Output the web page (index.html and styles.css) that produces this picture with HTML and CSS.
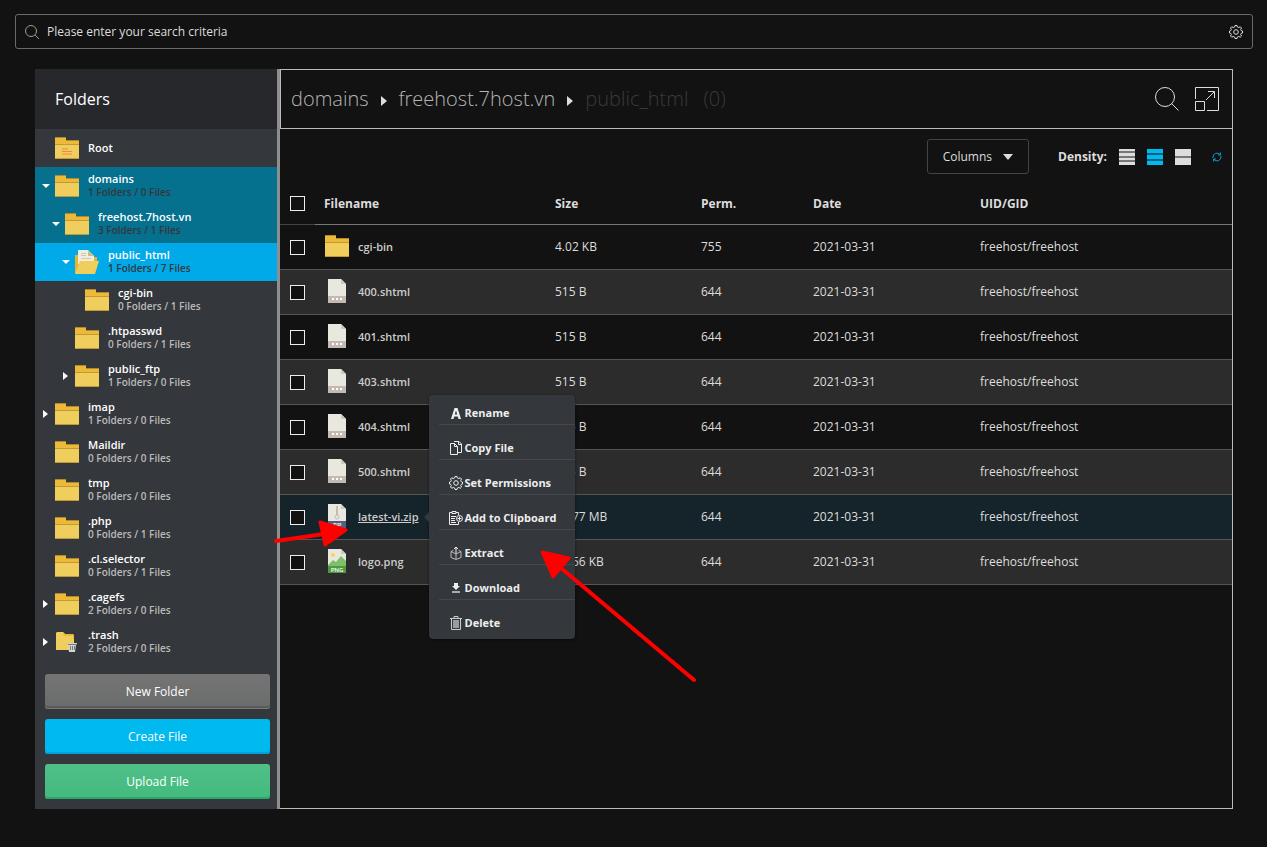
FILE: index.html
```html
<!DOCTYPE html>
<html lang="en">
<head>
  <meta charset="UTF-8">
  <meta name="viewport" content="width=device-width, initial-scale=1.0">
  <title>File Manager</title>
  <link rel="stylesheet" href="styles.css">
</head>
<body>
  <!-- icon sprite -->
  <svg class="sprite" width="0" height="0" aria-hidden="true">
    <symbol id="folder" viewBox="0 0 24 22">
      <path fill="#ecba38" d="M0 0h11v3h13v5H0z"/>
      <path fill="#b08b2b" d="M0 0h11v1H0zM11 3h13v1H11z"/>
      <path fill="#efce5e" d="M0 7h24v15H0z"/>
      <path fill="#bf9a35" d="M0 7h24v1H0zM0 21h24v1H0z"/>
    </symbol>
    <symbol id="folder-root" viewBox="0 0 24 22">
      <use href="#folder"/>
      <path fill="#f4a853" d="M7 11h6v2H7zM7 16h10v2H7z"/>
      <path fill="#ee8a3c" d="M7 14h10v1H7z"/>
    </symbol>
    <symbol id="folder-open" viewBox="0 0 24 24">
      <path fill="#ecb32f" d="M0 5h3v-1h1v4h15V7h3v5L4 23H0z"/>
      <path fill="#f2eedd" d="M3 0h10l6 6v8H3z"/>
      <path fill="#c9bd8e" d="M13 0l6 6h-6z"/>
      <path fill="#cfc9b4" d="M6 3h5v1H6zM6 5h5v1H6zM6 8h10v1H6z"/>
      <path fill="#efce5e" d="M5 11h19l-4 13H0z"/>
    </symbol>
    <symbol id="folder-trash" viewBox="0 0 24 22">
      <path fill="#efce5e" d="M1 2l1-1h6l2 2v1h9v15H1z"/>
      <path fill="#ecba38" d="M8 1l2 2h8l1 1v4h-1V5H9z"/>
      <path fill="#d5d5d5" d="M13 12h9v2h-1l-1 7h-6l-1-7z"/>
      <path fill="#777" d="M13 13h9v1h-9zM15 15h1v4h-1zM17 15h1v4h-1zM19 15h1v4h-1z"/>
    </symbol>
    <symbol id="file" viewBox="0 0 20 24">
      <path fill="#e9e8df" d="M1 0h13l5 5v12H1z"/>
      <path fill="#cccbc2" d="M14 0l5 5h-5z"/>
      <path fill="#c5b9b3" d="M1 17h18v7H1z"/>
      <path fill="#fff" d="M5 19h2v2H5zM9 19h2v2H9zM13 19h2v2h-2z"/>
    </symbol>
    <symbol id="file-zip" viewBox="0 0 20 24">
      <path fill="#e9e8df" d="M1 0h13l5 5v12H1z"/>
      <path fill="#cccbc2" d="M14 0l5 5h-5z"/>
      <path stroke="#c5b9b3" stroke-width="2" d="M10 2v9"/>
      <circle cx="10" cy="13" r="2" fill="none" stroke="#c5b9b3"/>
      <path fill="#556080" d="M1 17h18v7H1z"/>
      <text x="10" y="23" class="ext">ZIP</text>
    </symbol>
    <symbol id="file-png" viewBox="0 0 20 24">
      <path fill="#e9e8df" d="M1 0h13l5 5v12H1z"/>
      <path fill="#cccbc2" d="M14 0l5 5h-5z"/>
      <circle cx="6" cy="6" r="2" fill="#f3d55b"/>
      <path fill="#7cc069" d="M1 16l5-5 3 2 5-6 5 5v5H1z"/>
      <path fill="#4f9a3e" d="M1 17h18v7H1z"/>
      <text x="10" y="23" class="ext">PNG</text>
    </symbol>
    <symbol id="search" viewBox="0 0 24 24">
      <circle cx="10" cy="10" r="9.5" fill="none" stroke="currentColor"/>
      <path fill="none" stroke="currentColor" d="M16.5 16.5l7 7"/>
    </symbol>
    <symbol id="search-small" viewBox="0 0 14 14">
      <circle cx="6" cy="6" r="5.5" fill="none" stroke="currentColor"/>
      <path fill="none" stroke="currentColor" d="M10 10l4 4"/>
    </symbol>
    <symbol id="gear" viewBox="0 0 14 14">
      <path fill="none" stroke="currentColor" d="M5.6 2l.4-1.5h2L8.400 2l1.400.6 1.400-.9 1.300 1.300-.8 1.400.5 1.200 1.300.4v2l-1.300.4-.5 1.200.8 1.400-1.300 1.300-1.400-.9-1.400.6L8 13.500H6L5.600 12l-1.400-.6-1.400.9L1.500 11l.8-1.400-.5-1.200L.5 8V6l1.300-.4.5-1.200L1.500 3l1.300-1.300 1.400.9z"/>
      <circle cx="7" cy="7" r="2.300" fill="none" stroke="currentColor"/>
    </symbol>
    <symbol id="expand" viewBox="0 0 24 24">
      <path fill="none" stroke="currentColor" d="M.5 12V.5h23v23H12M.5 14.500h9v9h-9zM11 13l8.500-8.500M13 4.500h6.500V11"/>
    </symbol>
    <symbol id="refresh" viewBox="0 0 10 10">
      <path fill="none" stroke="currentColor" d="M1 6V5a4 4 0 0 1 7-2.500M9 4v1a4 4 0 0 1-7 2.500M8.500.5v2.500H6M1.500 9.500V7H4"/>
    </symbol>
    <symbol id="caret-down" viewBox="0 0 8 8"><path fill="currentColor" d="M0 2h8L4 6z"/></symbol>
    <symbol id="caret-right" viewBox="0 0 8 8"><path fill="currentColor" d="M1 0l5 4-5 4z"/></symbol>
    <symbol id="crumb" viewBox="0 0 6 10"><path fill="currentColor" d="M0 0l6 5-6 5z"/></symbol>
    <symbol id="rename" viewBox="0 0 14 14">
      <path fill="currentColor" fill-rule="evenodd" d="M2 13L5.500 2h3L12 13H9.500l-.7-2.500H5.200L4.500 13zM5.800 8.500h2.400L7 4.500z"/>
    </symbol>
    <symbol id="copy" viewBox="0 0 14 14">
      <path fill="none" stroke="currentColor" d="M1.500 2.500h4l3 3v8h-7zM5.500 2.500v3h3M5 .5h5l2.500 2.500v8.500H8.500M9.500.5v3h3"/>
    </symbol>
    <symbol id="clipboard" viewBox="0 0 14 14">
      <path fill="none" stroke="currentColor" d="M3 1.500H.5v12h9V11M7 1.500h2.500V4M3 .5h4v2H3zM2 5.500h5M2 7.500h4M2 9.500h4M2 11.500h5"/>
      <circle cx="10.500" cy="7.500" r="3" fill="none" stroke="currentColor"/>
      <path stroke="currentColor" d="M10.500 5.500v4M8.500 7.500h4"/>
    </symbol>
    <symbol id="extract" viewBox="0 0 14 14">
      <path fill="none" stroke="currentColor" d="M7 8V1M5 3l2-2 2 2"/>
      <path fill="none" stroke="#bbb" d="M4.500 4.500l-2.500 1v6l5 2 5-2v-6l-2.500-1M2 5.500l5 2.500 5-2.500M7 8v5"/>
    </symbol>
    <symbol id="download" viewBox="0 0 14 14">
      <path fill="currentColor" d="M5 2h4v3h2L7 9 3 5h2z"/>
      <path fill="#aaa" d="M3 10h8v2H3z"/>
    </symbol>
    <symbol id="delete" viewBox="0 0 14 14">
      <path fill="#9a9da0" d="M4 4h6v8H4z"/>
      <path fill="none" stroke="#ccc" d="M1 2.500h12M5 2V.5h4V2M2.500 3v10.500h9V3"/>
    </symbol>
  </svg>

  <form class="search-bar">
    <svg class="search-icon"><use href="#search-small"/></svg>
    <input type="text" aria-label="Search" placeholder="Please enter your search criteria">
    <button type="button" class="icon-btn" aria-label="Search settings"><svg class="icon-14"><use href="#gear"/></svg></button>
  </form>

  <div class="manager">
    <aside class="sidebar">
      <h2>Folders</h2>
      <ul class="tree">
        <li><a href="#"><span class="toggle"></span><svg class="folder"><use href="#folder-root"/></svg><span class="label"><b>Root</b></span></a></li>
        <li class="open"><a href="#"><svg class="toggle"><use href="#caret-down"/></svg><svg class="folder"><use href="#folder"/></svg><span class="label"><b>domains</b><small>1 Folders / 0 Files</small></span></a></li>
        <li class="open level-1"><a href="#"><svg class="toggle"><use href="#caret-down"/></svg><svg class="folder"><use href="#folder"/></svg><span class="label"><b>freehost.7host.vn</b><small>3 Folders / 1 Files</small></span></a></li>
        <li class="current level-2"><a href="#"><svg class="toggle"><use href="#caret-down"/></svg><svg class="folder folder-tall"><use href="#folder-open"/></svg><span class="label"><b>public_html</b><small>1 Folders / 7 Files</small></span></a></li>
        <li class="level-3"><a href="#"><span class="toggle"></span><svg class="folder"><use href="#folder"/></svg><span class="label"><b>cgi-bin</b><small>0 Folders / 1 Files</small></span></a></li>
        <li class="level-2"><a href="#"><span class="toggle"></span><svg class="folder"><use href="#folder"/></svg><span class="label"><b>.htpasswd</b><small>0 Folders / 1 Files</small></span></a></li>
        <li class="level-2"><a href="#"><svg class="toggle"><use href="#caret-right"/></svg><svg class="folder"><use href="#folder"/></svg><span class="label"><b>public_ftp</b><small>1 Folders / 0 Files</small></span></a></li>
        <li><a href="#"><svg class="toggle"><use href="#caret-right"/></svg><svg class="folder"><use href="#folder"/></svg><span class="label"><b>imap</b><small>1 Folders / 0 Files</small></span></a></li>
        <li><a href="#"><span class="toggle"></span><svg class="folder"><use href="#folder"/></svg><span class="label"><b>Maildir</b><small>0 Folders / 0 Files</small></span></a></li>
        <li><a href="#"><span class="toggle"></span><svg class="folder"><use href="#folder"/></svg><span class="label"><b>tmp</b><small>0 Folders / 0 Files</small></span></a></li>
        <li><a href="#"><span class="toggle"></span><svg class="folder"><use href="#folder"/></svg><span class="label"><b>.php</b><small>0 Folders / 1 Files</small></span></a></li>
        <li><a href="#"><span class="toggle"></span><svg class="folder"><use href="#folder"/></svg><span class="label"><b>.cl.selector</b><small>0 Folders / 1 Files</small></span></a></li>
        <li><a href="#"><svg class="toggle"><use href="#caret-right"/></svg><svg class="folder"><use href="#folder"/></svg><span class="label"><b>.cagefs</b><small>2 Folders / 0 Files</small></span></a></li>
        <li><a href="#"><svg class="toggle"><use href="#caret-right"/></svg><svg class="folder"><use href="#folder-trash"/></svg><span class="label"><b>.trash</b><small>2 Folders / 0 Files</small></span></a></li>
      </ul>
      <div class="actions">
        <button type="button" class="btn btn-grey">New Folder</button>
        <button type="button" class="btn btn-blue">Create File</button>
        <button type="button" class="btn btn-green">Upload File</button>
      </div>
    </aside>

    <main class="content">
      <header class="path-bar">
        <nav class="breadcrumb">
          <a href="#">domains</a>
          <svg class="crumb-arrow"><use href="#crumb"/></svg>
          <a href="#">freehost.7host.vn</a>
          <svg class="crumb-arrow"><use href="#crumb"/></svg>
          <span class="here">public_html</span>
          <span class="here count">(0)</span>
        </nav>
        <button type="button" class="icon-btn" aria-label="Search"><svg class="icon-24"><use href="#search"/></svg></button>
        <button type="button" class="icon-btn" aria-label="Full screen"><svg class="icon-24"><use href="#expand"/></svg></button>
      </header>

      <div class="panel">
        <div class="toolbar">
          <button type="button" class="columns-btn">Columns <span class="arrow-down"></span></button>
          <span class="density-label">Density:</span>
          <button type="button" class="density dense" aria-label="Compact"><i></i><i></i><i></i><i></i></button>
          <button type="button" class="density active" aria-label="Normal"><i></i><i></i><i></i></button>
          <button type="button" class="density" aria-label="Comfortable"><i></i><i></i></button>
          <button type="button" class="icon-btn refresh" aria-label="Refresh"><svg class="icon-10"><use href="#refresh"/></svg></button>
        </div>

        <table class="files">
          <thead>
            <tr>
              <th class="check"><input type="checkbox" aria-label="Select all"></th>
              <th class="name">Filename</th>
              <th class="size">Size</th>
              <th class="perm">Perm.</th>
              <th class="date">Date</th>
              <th class="owner">UID/GID</th>
            </tr>
          </thead>
          <tbody>
            <tr>
              <td class="check"><input type="checkbox" aria-label="cgi-bin"></td>
              <td><div class="file"><svg class="folder"><use href="#folder"/></svg><a href="#">cgi-bin</a></div></td>
              <td>4.02 KB</td><td>755</td><td>2021-03-31</td><td>freehost/freehost</td>
            </tr>
            <tr>
              <td class="check"><input type="checkbox" aria-label="400.shtml"></td>
              <td><div class="file"><svg class="doc"><use href="#file"/></svg><a href="#">400.shtml</a></div></td>
              <td>515 B</td><td>644</td><td>2021-03-31</td><td>freehost/freehost</td>
            </tr>
            <tr>
              <td class="check"><input type="checkbox" aria-label="401.shtml"></td>
              <td><div class="file"><svg class="doc"><use href="#file"/></svg><a href="#">401.shtml</a></div></td>
              <td>515 B</td><td>644</td><td>2021-03-31</td><td>freehost/freehost</td>
            </tr>
            <tr>
              <td class="check"><input type="checkbox" aria-label="403.shtml"></td>
              <td><div class="file"><svg class="doc"><use href="#file"/></svg><a href="#">403.shtml</a></div></td>
              <td>515 B</td><td>644</td><td>2021-03-31</td><td>freehost/freehost</td>
            </tr>
            <tr>
              <td class="check"><input type="checkbox" aria-label="404.shtml"></td>
              <td><div class="file"><svg class="doc"><use href="#file"/></svg><a href="#">404.shtml</a></div></td>
              <td>515 B</td><td>644</td><td>2021-03-31</td><td>freehost/freehost</td>
            </tr>
            <tr>
              <td class="check"><input type="checkbox" aria-label="500.shtml"></td>
              <td><div class="file"><svg class="doc"><use href="#file"/></svg><a href="#">500.shtml</a></div></td>
              <td>515 B</td><td>644</td><td>2021-03-31</td><td>freehost/freehost</td>
            </tr>
            <tr class="selected">
              <td class="check"><input type="checkbox" aria-label="latest-vi.zip"></td>
              <td>
                <div class="file">
                  <svg class="doc"><use href="#file-zip"/></svg>
                  <a href="#">latest-vi.zip</a>
                  <!-- context menu of the file -->
                  <div class="menu">
                    <button type="button"><svg class="icon-14"><use href="#rename"/></svg>Rename</button>
                    <button type="button"><svg class="icon-14"><use href="#copy"/></svg>Copy File</button>
                    <button type="button"><svg class="icon-14"><use href="#gear"/></svg>Set Permissions</button>
                    <button type="button"><svg class="icon-14"><use href="#clipboard"/></svg>Add to Clipboard</button>
                    <button type="button"><svg class="icon-14"><use href="#extract"/></svg>Extract</button>
                    <button type="button"><svg class="icon-14"><use href="#download"/></svg>Download</button>
                    <button type="button"><svg class="icon-14"><use href="#delete"/></svg>Delete</button>
                  </div>
                </div>
              </td>
              <td>15.77 MB</td><td>644</td><td>2021-03-31</td><td>freehost/freehost</td>
            </tr>
            <tr>
              <td class="check"><input type="checkbox" aria-label="logo.png"></td>
              <td><div class="file"><svg class="doc"><use href="#file-png"/></svg><a href="#">logo.png</a></div></td>
              <td>10.56 KB</td><td>644</td><td>2021-03-31</td><td>freehost/freehost</td>
            </tr>
          </tbody>
        </table>
      </div>
    </main>
  </div>

  <!-- red pointers over the page -->
  <svg class="pointers" viewBox="0 0 430 170" aria-hidden="true">
    <path d="M6 26l48-7M291 53l133 112" fill="none" stroke="#f00" stroke-width="4" stroke-linecap="round"/>
    <path d="M50 7l26 8-21 15zM272 37l27 6-16 19z" fill="#f00" stroke="#f00" stroke-width="3" stroke-linejoin="round"/>
  </svg>
</body>
</html>
```
FILE: styles.css
```css
* {
  box-sizing: border-box;
}

body {
  margin: 0;
  padding: 14px 14px 38px 15px;
  background: #121212;
  color: #ddd;
  font-family: "Open Sans", sans-serif;
  font-size: 12px;
}

a {
  color: inherit;
  text-decoration: none;
}

button,
input {
  font: inherit;
  color: inherit;
}

button {
  border: 0;
  padding: 0;
  background: none;
  cursor: pointer;
}

svg {
  display: block;
  flex: none;
}

.sprite {
  position: absolute;
}

.ext {
  fill: #fff;
  font-family: "Open Sans", sans-serif;
  font-size: 6px;
  font-weight: 600;
  text-anchor: middle;
}

.icon-10 { width: 10px; height: 10px; }
.icon-14 { width: 14px; height: 14px; }
.icon-24 { width: 24px; height: 24px; }

/* search */
.search-bar {
  display: flex;
  align-items: center;
  height: 35px;
  padding: 0 9px;
  border: 1px solid #6a6a6a;
  border-radius: 3px;
}

.search-icon {
  width: 14px;
  height: 14px;
  color: #999;
}

.search-bar input {
  flex: 1;
  margin-left: 8px;
  padding: 0;
  border: 0;
  outline: 0;
  background: none;
}

.search-bar input::placeholder {
  color: #ddd;
}

/* layout */
.manager {
  display: flex;
  margin: 20px 20px 0;
}

.sidebar {
  flex: none;
  width: 245px;
  border-right: 3px solid #8e8e8e;
  background: #34373c;
}

.sidebar h2 {
  margin: 0;
  padding-left: 20px;
  background: #27282c;
  color: #fff;
  font-size: 16px;
  font-weight: 400;
  line-height: 60px;
}

.tree {
  margin: 0;
  padding: 0;
  list-style: none;
}

.tree a {
  display: flex;
  align-items: center;
  height: 38px;
  padding-left: 7px;
}

.tree .level-1 a { padding-left: 17px; }
.tree .level-2 a { padding-left: 27px; }
.tree .level-3 a { padding-left: 37px; }

.toggle {
  width: 8px;
  height: 8px;
  margin-right: 5px;
  color: #fff;
}

.folder {
  width: 24px;
  height: 22px;
}

.folder-tall {
  height: 24px;
}

.label {
  margin-left: 9px;
}

.label b {
  display: block;
  color: #fff;
  font-size: 11px;
  font-weight: 600;
  line-height: 12px;
}

.label small {
  display: block;
  color: #bbb;
  font-size: 10px;
  font-weight: 600;
  line-height: 14px;
}

.open { background: #06708f; }
.current { background: #00a9e8; }

.open small,
.current small {
  color: #34373c;
}

.actions {
  display: grid;
  gap: 10px;
  padding: 13px 7px 10px 10px;
}

.btn {
  height: 35px;
  border-radius: 3px;
  color: #fff;
}

.btn-grey {
  background: linear-gradient(#747474, #6a6c6b);
  box-shadow: inset 0 -1px #777, inset 0 -3px #5b5b5b;
}

.btn-blue {
  background: #00b9ee;
  box-shadow: inset 0 -2px #00a2dd;
}

.btn-green {
  background: linear-gradient(#50c088, #43ba7e);
  box-shadow: inset 0 -2px #2ba766;
}

.content {
  flex: 1;
  display: flex;
  flex-direction: column;
  min-width: 0;
}

.path-bar {
  display: flex;
  align-items: center;
  gap: 16px;
  height: 60px;
  padding: 0 13px 0 10px;
  border: 1px solid #bbb;
}

.breadcrumb {
  display: flex;
  flex: 1;
  align-items: center;
  gap: 12px;
  color: #b5b5b5;
  font-size: 20px;
  font-weight: 300;
  line-height: 26px;
}

.crumb-arrow {
  width: 6px;
  height: 10px;
  margin-top: 4px;
  color: #ddd;
}

.here {
  color: #3a3a3a;
}

.count {
  margin-left: 3px;
}

.panel {
  flex: 1;
  border: solid #bbb;
  border-width: 0 1px 1px 0;
}

/* toolbar */
.toolbar {
  display: flex;
  align-items: center;
  justify-content: flex-end;
  gap: 12px;
  padding: 10px 10px 9px;
}

.columns-btn {
  display: flex;
  align-items: center;
  gap: 11px;
  height: 35px;
  margin-right: 17px;
  padding: 0 15px;
  border: 1px solid #444;
  border-radius: 3px;
}

.arrow-down {
  border: solid transparent;
  border-width: 6px 5px 0;
  border-top-color: #ddd;
}

.density-label {
  font-weight: 700;
}

.density {
  display: flex;
  flex-direction: column;
  gap: 2px;
  width: 16px;
  height: 16px;
  background: #777;
}

.density i {
  flex: 1;
  width: 16px;
  background: #ddd;
}

.density.active {
  background: #08607a;
}

.density.active i {
  background: #00b9ee;
}

.refresh {
  margin-left: 9px;
  color: #0a9bc8;
}

/* files */
.files {
  width: 100%;
  border-collapse: separate;
  border-spacing: 0;
  table-layout: fixed;
}

.files th,
.files td {
  height: 45px;
  padding: 0 0 2px 9px;
  border-bottom: 1px solid #555;
  text-align: left;
}

.files th {
  height: 42px;
  padding-bottom: 0;
  border-color: #777;
  font-weight: 700;
}

.files th.check {
  border-color: #444;
}

.files .check {
  width: 35px;
  padding: 0 0 0 10px;
}

.files .size { width: 146px; }
.files .perm { width: 112px; }
.files .date { width: 167px; }
.files .owner { width: 261px; }

.files tbody tr:nth-child(even) {
  background: #2c2c2c;
}

.files .selected {
  background: #15242a;
}

.files input {
  display: block;
  width: 15px;
  height: 15px;
  margin: 0;
  border: 1px solid #eee;
  background: #121212;
  appearance: none;
}

.file {
  display: flex;
  align-items: center;
  position: relative;
  width: max-content;
  padding-left: 1px;
  font-size: 11px;
  font-weight: 600;
  color: #ccc;
}

.file a {
  margin-left: 9px;
}

.selected .file a {
  text-decoration: underline;
}

.doc {
  width: 20px;
  height: 24px;
  margin: 0 2px;
}

/* context menu */
.menu {
  position: absolute;
  top: -109px;
  left: calc(100% + 10px);
  width: 146px;
  padding-bottom: 5px;
  border-radius: 4px;
  background: #34373c;
  box-shadow: 0 1px 3px rgba(0, 0, 0, .5);
}

.menu::before {
  content: "";
  position: absolute;
  top: 117px;
  left: -5px;
  border: solid transparent;
  border-width: 5px 5px 5px 0;
  border-right-color: #34373c;
}

.menu button {
  display: flex;
  align-items: center;
  gap: 2px;
  width: 136px;
  margin-left: 10px;
  padding: 16px 0 4px 10px;
  border-bottom: 1px solid #44474b;
  color: #eee;
  font-size: 11px;
  font-weight: 700;
  line-height: 14px;
}

.menu button:first-child {
  padding-top: 11px;
}

.menu button:last-child {
  border-bottom: 0;
}

.pointers {
  position: absolute;
  top: 515px;
  left: 270px;
  width: 430px;
  height: 170px;
  pointer-events: none;
}
```
